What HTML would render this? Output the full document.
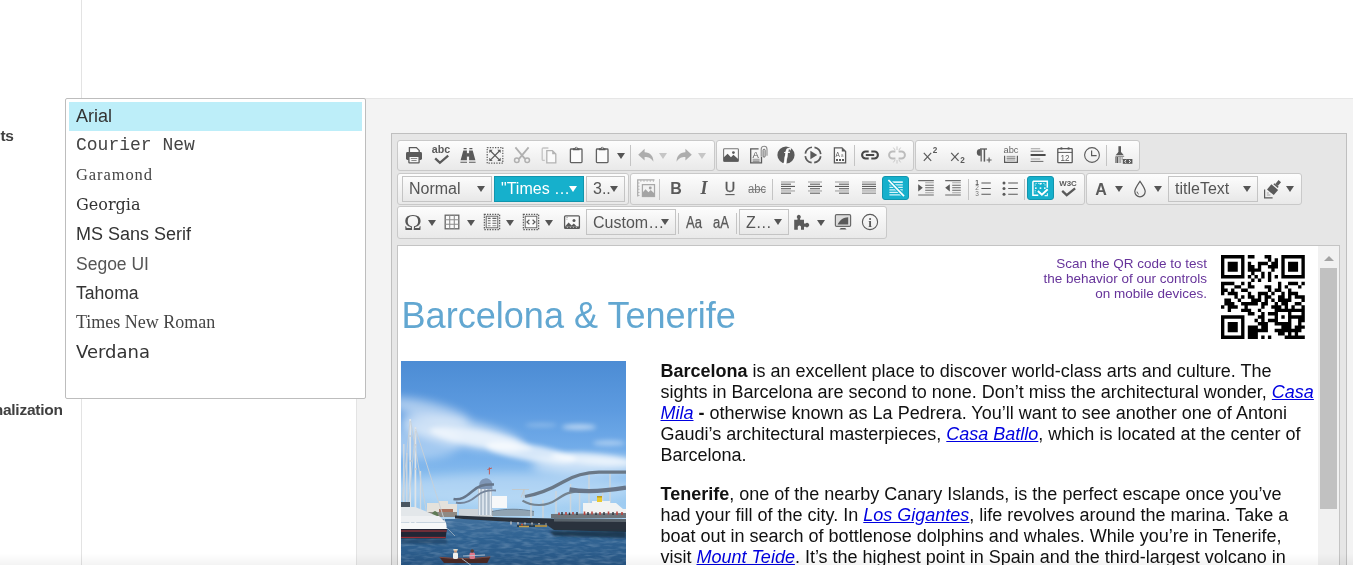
<!DOCTYPE html>
<html><head><meta charset="utf-8"><title>RadEditor</title>
<style>
html,body{margin:0;padding:0}
body{will-change:transform;width:1353px;height:565px;overflow:hidden;position:relative;background:#fff;font-family:"Liberation Sans",sans-serif;color:#333}
.abs{position:absolute}
.vline{left:81px;top:0;width:1px;height:565px;background:#e3e3e3}
.panel{left:356px;top:98px;width:997px;height:467px;background:#f3f3f3;border-left:1px solid #e3e3e3;border-top:1px solid #e6e6e6;box-sizing:border-box}
.editor{left:391px;top:133px;width:956px;height:440px;background:#e6e6e6;border:1px solid #bfbfbf;box-sizing:border-box}
.tb{position:absolute;box-sizing:border-box;border:1px solid #c9c9c9;border-radius:3px;background:linear-gradient(#fdfdfd,#e9e9e9)}
.dd{position:absolute;box-sizing:border-box;border:1px solid #c4c4c4;background:linear-gradient(#fcfcfc,#e8e8e8);font-size:16px;line-height:24px;color:#555;white-space:nowrap;overflow:hidden;padding-left:6px}
.dd.r3{padding-top:1px}
.dd.act{background:#16b0cc;border-color:#1295ad;color:#fff}
.arr{position:absolute;width:0;height:0;border-left:4.3px solid transparent;border-right:4.3px solid transparent;border-top:6.2px solid #555}
.arr.dis{border-top-color:#c6c6c6}
.arr.w{border-top-color:#fff}
.sep{position:absolute;width:1px;height:21px;background:#c4c4c4}
.actbtn{position:absolute;box-sizing:border-box;width:27px;height:24px;border-radius:3px;background:#16b0cc;border:1px solid #1295ad}
.ic{position:absolute;width:20px;height:20px;overflow:visible}
.content{left:397px;top:245px;width:943px;height:330px;background:#fff;border:1px solid #c4c4c4;box-sizing:border-box;overflow:hidden}
.popup{left:65px;top:98px;width:301px;height:301px;background:#fff;border:1px solid #bdbdbd;border-radius:2px;box-sizing:border-box}
.popup .it{position:absolute;left:10px;font-size:18px;line-height:20px;color:#333;white-space:nowrap}
.lbl{font-weight:bold;font-size:15.5px;line-height:20px;letter-spacing:-.25px;color:#404040;white-space:nowrap}
.bodytxt{font-size:18px;line-height:21px;color:#111;white-space:nowrap}
.bodytxt a{color:#0000e0;font-style:italic;text-decoration:underline}
.qrtxt{font-size:13.5px;line-height:14.9px;color:#66339a;text-align:right;white-space:nowrap}
</style></head><body>

<div class="abs vline"></div>
<div class="abs panel"></div>
<div class="abs lbl" style="right:1339.3px;top:125.5px">ts</div>
<div class="abs lbl" style="right:1290.3px;top:400px">nalization</div>
<div class="abs editor"></div>
<div class="tb" style="left:397px;top:140px;width:318px;height:31px"></div>
<div class="tb" style="left:716px;top:140px;width:198px;height:31px"></div>
<div class="tb" style="left:915px;top:140px;width:225px;height:31px"></div>
<svg class="ic" style="left:404.2px;top:145px" viewBox="0 0 20 20"><path d="M5.4 7.6V2.6h7l2.800 2.800v2.200" fill="#fafafa" stroke="#5a5a5a" stroke-width="1.300"/>
<path d="M2 8.400q0-1.400 1.400-1.400h13.200q1.400 0 1.400 1.400v5.200q0 1.400-1.400 1.400H3.400q-1.400 0-1.400-1.400z" fill="#5a5a5a"/>
<rect x="4.900" y="11.300" width="10.200" height="6.500" rx="0.600" fill="#f4f4f4" stroke="#5a5a5a" stroke-width="1.300"/>
<path d="M6.800 13.500h6.400M7.400 15.500h5.200" stroke="#8a8a8a" stroke-width="1"/></svg>
<svg class="ic" style="left:431.4px;top:145px" viewBox="0 0 20 20"><text x="10" y="8.400" text-anchor="middle" font-size="10" font-weight="bold" font-family="Liberation Sans, sans-serif" fill="#5a5a5a" textLength="18.400" lengthAdjust="spacingAndGlyphs">abc</text>
<path d="M4.200 13.300l4.700 4.500 8.300-7.200" fill="none" stroke="#5a5a5a" stroke-width="2.300"/></svg>
<svg class="ic" style="left:458.3px;top:145px" viewBox="0 0 20 20"><path d="M2.6 15.3L5.3 5.6h3.6v9.7zM17.4 15.3L14.7 5.6h-3.6v9.7z" fill="#5a5a5a"/>
<rect x="8.5" y="8.2" width="3" height="3.4" fill="#5a5a5a"/>
<path d="M5.6 3.6h3M11.4 3.6h3" stroke="#5a5a5a" stroke-width="1.1"/>
<path d="M2.4 17.3h6.6M11 17.3h6.6" stroke="#5a5a5a" stroke-width="1.1"/></svg>
<svg class="ic" style="left:484.8px;top:145px" viewBox="0 0 20 20"><rect x="2.2" y="2.6" width="15.6" height="15.6" fill="none" stroke="#5a5a5a" stroke-width="1.2" stroke-dasharray="1.3 1.3"/>
<path d="M5.6 6l8.8 8.8M14.4 6l-8.8 8.8" stroke="#5a5a5a" stroke-width="1.2"/>
<path d="M4.3 4.7h3.4l-3.4 3.4zM15.7 4.7h-3.4l3.4 3.4zM4.3 16.1h3.4l-3.4-3.4zM15.7 16.1h-3.4l3.4-3.4z" fill="#5a5a5a"/></svg>
<svg class="ic" style="left:512.2px;top:145px" viewBox="0 0 20 20"><path d="M3.400 2.400L13 13.800M16.600 2.400L7 13.800" stroke="#b0b0b0" stroke-width="1.800" fill="none"/>
<circle cx="4.800" cy="15.300" r="2.300" fill="none" stroke="#b0b0b0" stroke-width="1.500"/><circle cx="15.200" cy="15.300" r="2.300" fill="none" stroke="#b0b0b0" stroke-width="1.500"/></svg>
<svg class="ic" style="left:539.3px;top:145px" viewBox="0 0 20 20"><path d="M9.4 3H4.2q-1 0-1 1v10.4q0 1 1 1h1.6" fill="none" stroke="#c4c4c4" stroke-width="1.3"/>
<path d="M7.8 5.6h5.6l3.4 3.4v8.8h-9z" fill="#fafafa" stroke="#b3b3b3" stroke-width="1.3"/><path d="M13.2 5.6l3.6 3.6h-3.6z" fill="#b3b3b3"/></svg>
<svg class="ic" style="left:566.4px;top:145px" viewBox="0 0 20 20"><rect x="4.400" y="4" width="11.600" height="13.600" rx="0.800" fill="#fbfbfb" stroke="#606060" stroke-width="1.300"/>
<path d="M6.900 5.300V3.200h1.800a1.500 1.500 0 0 1 3 0h1.800v2.100z" fill="#5a5a5a"/><circle cx="10.200" cy="3" r="0.650" fill="#f4f4f4"/></svg>
<svg class="ic" style="left:592.2px;top:145px" viewBox="0 0 20 20"><rect x="4.400" y="4" width="11.600" height="13.600" rx="0.800" fill="#fbfbfb" stroke="#606060" stroke-width="1.300"/>
<path d="M6.900 5.300V3.200h1.800a1.500 1.500 0 0 1 3 0h1.800v2.100z" fill="#5a5a5a"/><circle cx="10.200" cy="3" r="0.650" fill="#f4f4f4"/></svg>
<div class="arr " style="left:616.7px;top:153px"></div>
<div class="sep" style="left:629.5px;top:145px"></div>
<svg class="ic" style="left:635.5px;top:145px" viewBox="0 0 20 20"><path d="M8.600 3.800L2.200 9.800l6.400 5.800v-3.500c4.200 0 6.600 1.200 8.800 4.600 0-5.600-3.200-9.200-8.800-9.400z" fill="#adadad"/></svg>
<div class="arr dis" style="left:659.4px;top:153px"></div>
<svg class="ic" style="left:674.4px;top:145px" viewBox="0 0 20 20"><path d="M11.400 3.800L17.800 9.800l-6.400 5.800v-3.500c-4.200 0-6.600 1.200-8.800 4.600 0-5.600 3.200-9.200 8.800-9.400z" fill="#adadad"/></svg>
<div class="arr dis" style="left:698.4px;top:153px"></div>
<svg class="ic" style="left:721px;top:145px" viewBox="0 0 20 20"><rect x="2.6" y="3.8" width="14.8" height="12.6" rx="0.8" fill="#fbfbfb" stroke="#777" stroke-width="1.1"/>
<path d="M2.600 16.400v-3.800l4-3.800 3.400 3.400 2.400-2.400 5 4.400v2.200z" fill="#5a5a5a"/><circle cx="12.400" cy="7.600" r="1.400" fill="#5a5a5a"/></svg>
<svg class="ic" style="left:748.7px;top:145px" viewBox="0 0 20 20"><path d="M9.600 3.800H1.700v14h10.800v-6" fill="none" stroke="#5a5a5a" stroke-width="1.300"/>
<text x="6.600" y="12.600" text-anchor="middle" font-size="9.500" font-family="Liberation Sans, sans-serif" fill="#5a5a5a">A</text>
<path d="M3.600 14.300h7" stroke="#9a9a9a" stroke-width="1"/><path d="M3.600 16.100h7" stroke="#5a5a5a" stroke-width="1"/>
<path d="M12.200 11.600V4.200a2.900 2.900 0 0 1 5.800 0v6.600" fill="none" stroke="#8a8a8a" stroke-width="1.100"/><path d="M14.100 5.200v6a1 1 0 0 0 2 0V5.200a1 1 0 0 0-2 0z" fill="none" stroke="#5a5a5a" stroke-width="0.900"/></svg>
<svg class="ic" style="left:775.6px;top:145px" viewBox="0 0 20 20"><circle cx="10" cy="10" r="8.600" fill="#5a5a5a"/>
<text x="10.600" y="15" text-anchor="middle" font-size="17" font-style="italic" font-weight="bold" font-family="Liberation Serif, serif" fill="#fff" stroke="#fff" stroke-width="0.400">f</text></svg>
<svg class="ic" style="left:802.6px;top:145px" viewBox="0 0 20 20"><circle cx="10" cy="10" r="7.800" fill="none" stroke="#5a5a5a" stroke-width="1.700" stroke-dasharray="9.650 2.600" stroke-dashoffset="-1.300"/>
<path d="M7.400 5.800l6.800 4.200-6.800 4.200z" fill="#5a5a5a"/></svg>
<svg class="ic" style="left:829.5px;top:145px" viewBox="0 0 20 20"><path d="M4.400 2.800h7.600l3.600 3.600v11.400H4.400z" fill="#fbfbfb" stroke="#5a5a5a" stroke-width="1.3"/><path d="M11.800 2.800l3.800 3.800h-3.800z" fill="#5a5a5a"/>
<text x="7.600" y="12" text-anchor="middle" font-size="6.500" font-family="Liberation Sans, sans-serif" fill="#5a5a5a">A</text><text x="12.200" y="12" text-anchor="middle" font-size="5" font-family="Liberation Sans, sans-serif" fill="#8a8a8a">a</text>
<path d="M6 14h2v2H6zM9 14h2v2H9zM12 14h2v2h-2z" fill="#5a5a5a"/></svg>
<div class="sep" style="left:853.5px;top:145px"></div>
<svg class="ic" style="left:859.8px;top:145px" viewBox="0 0 20 20"><path d="M8.700 6.500H5.600a3.500 3.500 0 0 0 0 7h3.100M11.300 6.500h3.100a3.500 3.500 0 0 1 0 7h-3.100" fill="none" stroke="#484848" stroke-width="2.100"/>
<path d="M5.800 10h8.400" stroke="#484848" stroke-width="2"/></svg>
<svg class="ic" style="left:887px;top:145px" viewBox="0 0 20 20"><path d="M8.400 6.500H5.600a3.500 3.500 0 0 0 0 7h2.800M11.600 6.500h2.800a3.500 3.500 0 0 1 0 7h-2.800" fill="none" stroke="#bcbcbc" stroke-width="2"/>
<path d="M10 1.400v3.600M10 15v3.600M6.400 2.600l1.800 2.600M13.600 2.600l-1.800 2.600M6.400 17.400l1.800-2.600M13.600 17.400l-1.800-2.600" stroke="#c8c8c8" stroke-width="1"/></svg>
<svg class="ic" style="left:920px;top:145px" viewBox="0 0 20 20"><path d="M3.800 7.900l7.400 8M11.200 7.900l-7.400 8" stroke="#5a5a5a" stroke-width="1.200"/>
<text x="15" y="8.400" text-anchor="middle" font-size="8.200" font-weight="bold" font-family="Liberation Sans, sans-serif" fill="#5a5a5a">2</text></svg>
<svg class="ic" style="left:947.5px;top:145px" viewBox="0 0 20 20"><path d="M3.200 7.900l7.400 8M10.600 7.900l-7.400 8" stroke="#5a5a5a" stroke-width="1.200"/>
<text x="14.500" y="18.100" text-anchor="middle" font-size="8.200" font-weight="bold" font-family="Liberation Sans, sans-serif" fill="#5a5a5a">2</text></svg>
<svg class="ic" style="left:974.3px;top:145px" viewBox="0 0 20 20"><path d="M7.400 4H6.200a3.400 3.400 0 0 0 0 6.800h1.200z" fill="#5a5a5a"/><path d="M6 4h7" stroke="#5a5a5a" stroke-width="1.300"/>
<path d="M7.200 4v12.600" stroke="#777" stroke-width="1.500"/><path d="M10.400 4v12.600" stroke="#5a5a5a" stroke-width="1.500"/>
<path d="M12.600 15h5M15.100 12.500v5" stroke="#5a5a5a" stroke-width="1.100"/></svg>
<svg class="ic" style="left:1001.2px;top:145px" viewBox="0 0 20 20"><text x="10" y="8.400" text-anchor="middle" font-size="8.800" font-family="Liberation Sans, sans-serif" fill="#666" textLength="15" lengthAdjust="spacingAndGlyphs">abc</text>
<path d="M3.600 10.800v6.600h12.800v-6.600" fill="none" stroke="#5a5a5a" stroke-width="1.200"/>
<path d="M5.600 11.400h8.800M5.600 15h8.800" stroke="#9a9a9a" stroke-width="1"/><path d="M5.600 13.200h8.800" stroke="#6a6a6a" stroke-width="1"/></svg>
<svg class="ic" style="left:1028.4px;top:145px" viewBox="0 0 20 20"><path d="M2.800 3.800h9.400M2.800 14h9.400" stroke="#a0a0a0" stroke-width="1.100"/>
<path d="M2.600 6.200h12.800M2.600 16.400h12.800" stroke="#6a6a6a" stroke-width="1"/><path d="M2.600 10h15" stroke="#4a4a4a" stroke-width="2"/></svg>
<svg class="ic" style="left:1055.4px;top:145px" viewBox="0 0 20 20"><rect x="2.800" y="3.600" width="14.400" height="14" rx="0.600" fill="#fbfbfb" stroke="#5a5a5a" stroke-width="1.300"/><path d="M2.800 7.400h14.400" stroke="#5a5a5a" stroke-width="1"/>
<circle cx="6.400" cy="3.400" r="1.200" fill="#5a5a5a"/><circle cx="13.600" cy="3.400" r="1.200" fill="#5a5a5a"/>
<text x="10" y="15.800" text-anchor="middle" font-size="8.600" font-family="Liberation Sans, sans-serif" fill="#5a5a5a" textLength="9" lengthAdjust="spacingAndGlyphs">12</text></svg>
<svg class="ic" style="left:1082.4px;top:145px" viewBox="0 0 20 20"><circle cx="10" cy="10" r="7.400" fill="none" stroke="#5a5a5a" stroke-width="1.100"/><path d="M9.600 5.400v5.200h5" fill="none" stroke="#5a5a5a" stroke-width="1.200"/></svg>
<div class="sep" style="left:1106.4px;top:145px"></div>
<svg class="ic" style="left:1112.4px;top:145px" viewBox="0 0 20 20"><rect x="6.400" y="1.200" width="2.600" height="6.600" fill="#5a5a5a"/><path d="M3.600 10.200L6.400 7h2.600l2.800 3.200z" fill="#5a5a5a"/>
<path d="M3.400 11.400h8.800" stroke="#8a8a8a" stroke-width="1"/>
<path d="M4 12v6M5.600 12v6" stroke="#5a5a5a" stroke-width="1.200"/><path d="M7.200 12v6M8.700 12v6M10.200 12v3" stroke="#9a9a9a" stroke-width="1"/>
<rect x="10.800" y="14" width="9.600" height="4.800" fill="#5a5a5a"/><path d="M14.200 15l-1.600 1.400 1.600 1.400M17 15l1.600 1.400-1.600 1.400" fill="none" stroke="#fff" stroke-width="1"/></svg>
<div class="tb" style="left:397px;top:173px;width:232px;height:32px"></div>
<div class="tb" style="left:630px;top:173px;width:455px;height:32px"></div>
<div class="tb" style="left:1086px;top:173px;width:216px;height:32px"></div>
<div class="dd " style="left:402px;top:176px;width:90px;height:26px">Normal</div>
<div class="arr " style="left:476.7px;top:186px"></div>
<div class="dd act" style="left:494px;top:176px;width:90px;height:26px">&quot;Times …</div>
<div class="arr w" style="left:568.7px;top:186px"></div>
<div class="dd " style="left:586px;top:176px;width:39px;height:26px">3..</div>
<div class="arr " style="left:609.7px;top:186px"></div>
<svg class="ic" style="left:636px;top:178px" viewBox="0 0 20 20"><g transform="translate(10 10) scale(1.12) translate(-10 -10)"><path d="M2.600 17.600V2.800h15" fill="none" stroke="#aaa" stroke-width="1.100"/>
<path d="M5.400 2.800v1.600M8.200 2.800v1.600M11 2.800v1.600M13.800 2.800v1.600M16.600 2.800v1.600M2.600 5.600h1.600M2.600 8.400h1.600M2.600 11.200h1.600M2.600 14h1.600M2.600 16.800h1.600" stroke="#b5b5b5" stroke-width="0.900"/>
<rect x="6.800" y="7" width="10.800" height="10.600" fill="#f2f2f2" stroke="#a8a8a8" stroke-width="1.100"/>
<path d="M6.800 17.600v-3.400l2.800-3 2.600 2.600 2-2 3.400 3.200v2.600z" fill="#a4a4a4"/><circle cx="13.800" cy="10" r="1.300" fill="#a4a4a4"/></g></svg>
<div class="sep" style="left:659.2px;top:179px"></div>
<svg class="ic" style="left:666.3px;top:178px" viewBox="0 0 20 20"><text x="10" y="15.600" text-anchor="middle" font-size="16" font-weight="bold" font-family="Liberation Sans, sans-serif" fill="#5a5a5a">B</text></svg>
<svg class="ic" style="left:693.5px;top:178px" viewBox="0 0 20 20"><text x="10" y="15.600" text-anchor="middle" font-size="18" font-weight="bold" font-style="italic" font-family="Liberation Serif, serif" fill="#5a5a5a">I</text></svg>
<svg class="ic" style="left:720.3px;top:178px" viewBox="0 0 20 20"><text x="10" y="14" text-anchor="middle" font-size="14.500" font-family="Liberation Sans, sans-serif" fill="#5a5a5a" stroke="#5a5a5a" stroke-width="0.300">U</text><path d="M5.400 16.600h9.200" stroke="#5a5a5a" stroke-width="1.100"/></svg>
<svg class="ic" style="left:747.2px;top:178px" viewBox="0 0 20 20"><text x="10" y="15" text-anchor="middle" font-size="12.500" font-family="Liberation Sans, sans-serif" fill="#777" textLength="18" lengthAdjust="spacingAndGlyphs">abc</text><path d="M1.400 11.600h17.200" stroke="#777" stroke-width="0.900"/></svg>
<div class="sep" style="left:771.5px;top:179px"></div>
<svg class="ic" style="left:777.9px;top:178px" viewBox="0 0 20 20"><path d="M3 4.0h14" stroke="#a6a6a6" stroke-width="1.150"/><path d="M3 6.2h10" stroke="#666" stroke-width="1.150"/><path d="M3 8.45h14" stroke="#5a5a5a" stroke-width="1.150"/><path d="M3 10.7h10" stroke="#666" stroke-width="1.150"/><path d="M3 12.95h14" stroke="#a6a6a6" stroke-width="1.150"/><path d="M3 15.2h10" stroke="#666" stroke-width="1.150"/></svg>
<svg class="ic" style="left:804.8px;top:178px" viewBox="0 0 20 20"><path d="M3 4.0h14" stroke="#a6a6a6" stroke-width="1.150"/><path d="M5 6.2h10" stroke="#666" stroke-width="1.150"/><path d="M3 8.45h14" stroke="#5a5a5a" stroke-width="1.150"/><path d="M5 10.7h10" stroke="#666" stroke-width="1.150"/><path d="M3 12.95h14" stroke="#a6a6a6" stroke-width="1.150"/><path d="M5 15.2h10" stroke="#666" stroke-width="1.150"/></svg>
<svg class="ic" style="left:831.7px;top:178px" viewBox="0 0 20 20"><path d="M3 4.0h14" stroke="#a6a6a6" stroke-width="1.150"/><path d="M7 6.2h10" stroke="#666" stroke-width="1.150"/><path d="M3 8.45h14" stroke="#5a5a5a" stroke-width="1.150"/><path d="M7 10.7h10" stroke="#666" stroke-width="1.150"/><path d="M3 12.95h14" stroke="#a6a6a6" stroke-width="1.150"/><path d="M7 15.2h10" stroke="#666" stroke-width="1.150"/></svg>
<svg class="ic" style="left:858.8px;top:178px" viewBox="0 0 20 20"><path d="M3 4.0h14" stroke="#a6a6a6" stroke-width="1.150"/><path d="M3 6.2h14" stroke="#666" stroke-width="1.150"/><path d="M3 8.45h14" stroke="#5a5a5a" stroke-width="1.150"/><path d="M3 10.7h14" stroke="#666" stroke-width="1.150"/><path d="M3 12.95h14" stroke="#a6a6a6" stroke-width="1.150"/><path d="M3 15.2h14" stroke="#8a8a8a" stroke-width="1.150"/></svg>
<div class="actbtn" style="left:882px;top:176px"></div>
<svg class="ic" style="left:885.6px;top:178px" viewBox="0 0 20 20"><path d="M3.400 3.200h13.400v1.800H3.400zM3.400 6.200h13.400v1.300H3.400zM3.400 8.700h13.400v1.300H3.400zM3.400 11.200h13.400v1.300H3.400zM3.400 13.700h13.400v1.300H3.400zM3.400 16.200h13.400v1.300H3.400z" fill="#d8f4fa"/>
<path d="M2 1.600l16.400 17" stroke="#16b0cc" stroke-width="3.600"/><path d="M2.400 2l15.600 16.200" stroke="#fff" stroke-width="1.700"/></svg>
<svg class="ic" style="left:916px;top:178px" viewBox="0 0 20 20"><path d="M2.200 2.600h15.600M2.200 17h15.600" stroke="#6a6a6a" stroke-width="1.100"/>
<path d="M9.200 4.800h8.600M9.200 14.800h8.600" stroke="#a6a6a6" stroke-width="1.100"/><path d="M9.200 7.300h8.600M9.200 9.800h8.600M9.200 12.300h8.600" stroke="#666" stroke-width="1.100"/>
<path d="M2.200 6.200l4.600 3.600-4.600 3.600z" fill="#5a5a5a"/></svg>
<svg class="ic" style="left:943px;top:178px" viewBox="0 0 20 20"><path d="M2.200 2.600h15.600M2.200 17h15.600" stroke="#6a6a6a" stroke-width="1.100"/>
<path d="M9.200 4.800h8.600M9.200 14.800h8.600" stroke="#a6a6a6" stroke-width="1.100"/><path d="M9.200 7.300h8.600M9.200 9.800h8.600M9.200 12.300h8.600" stroke="#666" stroke-width="1.100"/>
<path d="M6.800 6.200l-4.600 3.600 4.600 3.600z" fill="#5a5a5a"/></svg>
<div class="sep" style="left:967.5px;top:179px"></div>
<svg class="ic" style="left:973.2px;top:178px" viewBox="0 0 20 20"><path d="M8.400 5h9.400" stroke="#7a7a7a" stroke-width="1.300"/><path d="M8.400 10.500h9.400M8.400 16.200h9.400" stroke="#5a5a5a" stroke-width="1.100"/>
<text x="4" y="7" text-anchor="middle" font-size="6.500" font-weight="bold" font-family="Liberation Sans, sans-serif" fill="#5a5a5a">1</text>
<text x="4" y="12.300" text-anchor="middle" font-size="6.500" font-family="Liberation Sans, sans-serif" fill="#777">2</text>
<text x="4" y="17.800" text-anchor="middle" font-size="6.500" font-family="Liberation Sans, sans-serif" fill="#777">3</text></svg>
<svg class="ic" style="left:1000.4px;top:178px" viewBox="0 0 20 20"><path d="M8.200 5h9.600" stroke="#7a7a7a" stroke-width="1.300"/><path d="M8.200 10.500h9.600M8.200 16.200h9.600" stroke="#5a5a5a" stroke-width="1.100"/>
<circle cx="4" cy="5" r="1.500" fill="#5a5a5a"/><circle cx="4" cy="10.500" r="1.500" fill="#5a5a5a"/><circle cx="4" cy="16.200" r="1.500" fill="#5a5a5a"/></svg>
<div class="sep" style="left:1024.3px;top:179px"></div>
<div class="actbtn" style="left:1027px;top:176px"></div>
<svg class="ic" style="left:1030.4px;top:178px" viewBox="0 0 20 20"><path d="M2.900 3.200h14.400v6.600M2.900 3.200v14h5.400" fill="none" stroke="#fff" stroke-width="1.500"/>
<path d="M5.200 7.800V5.400h9.800v2.400M5.200 12v3" fill="none" stroke="#c8eef6" stroke-width="0.900" stroke-dasharray="1.400 1.200"/>
<rect x="9.600" y="5" width="1.800" height="1.600" fill="#fff"/><rect x="5" y="9.400" width="1.600" height="1.500" fill="#fff"/><rect x="9.700" y="9.400" width="1.600" height="1.500" fill="#fff"/><rect x="14" y="9.400" width="1.600" height="1.500" fill="#fff"/>
<path d="M7.900 13.100l4 3.600 5.800-5.500" fill="none" stroke="#fff" stroke-width="2"/>
<path d="M14.600 17.600h2.800v-2.400" fill="none" stroke="#e4f7fb" stroke-width="1.100"/></svg>
<svg class="ic" style="left:1058px;top:178px" viewBox="0 0 20 20"><text x="10" y="8.400" text-anchor="middle" font-size="7.400" font-weight="bold" font-family="Liberation Sans, sans-serif" fill="#5a5a5a" textLength="17.600" lengthAdjust="spacingAndGlyphs">W3C</text>
<path d="M4.200 12.800l4.500 4.300 8.400-6.800" fill="none" stroke="#5a5a5a" stroke-width="2.300"/></svg>
<svg class="ic" style="left:1090.7px;top:178px" viewBox="0 0 20 20"><text x="10" y="16.900" text-anchor="middle" font-size="16" font-weight="bold" font-family="Liberation Sans, sans-serif" fill="#5a5a5a">A</text></svg>
<div class="arr " style="left:1114.6px;top:186px"></div>
<svg class="ic" style="left:1130.2px;top:179px" viewBox="0 0 20 20"><path d="M10 2.400C8 5.400 4.800 9.600 4.800 12.600a5.200 5.200 0 0 0 10.400 0C15.200 9.600 12 5.400 10 2.400z" fill="none" stroke="#5a5a5a" stroke-width="1.200"/>
<path d="M7 12.600a3 3 0 0 0 1.800 2.600" fill="none" stroke="#5a5a5a" stroke-width="1"/></svg>
<div class="arr " style="left:1154.1px;top:186px"></div>
<div class="dd " style="left:1168px;top:176px;width:90px;height:26px">titleText</div>
<div class="arr " style="left:1242.7px;top:186px"></div>
<svg class="ic" style="left:1261.9px;top:179.5px" viewBox="0 0 20 20"><g transform="rotate(40 12 8)"><rect x="10.400" y="-1" width="3.200" height="5" fill="#5a5a5a"/><rect x="9.200" y="4" width="5.600" height="1.600" fill="#5a5a5a"/>
<path d="M7.600 6.800h8.800v6.800H7.600z" fill="#5a5a5a"/></g>
<path d="M2.600 9.600v8.200h8" fill="none" stroke="#5a5a5a" stroke-width="1.200"/><path d="M4.800 13h2M4.800 15h3.600" stroke="#9a9a9a" stroke-width="0.900"/></svg>
<div class="arr " style="left:1285.5px;top:186px"></div>
<div class="tb" style="left:397px;top:206px;width:490px;height:33px"></div>
<svg class="ic" style="left:403.3px;top:212px" viewBox="0 0 20 20"><text x="10" y="18" text-anchor="middle" font-size="24" font-family="Liberation Serif, serif" fill="#555">Ω</text></svg>
<div class="arr " style="left:427.6px;top:220px"></div>
<svg class="ic" style="left:442.1px;top:212px" viewBox="0 0 20 20"><rect x="3.200" y="3.200" width="13.600" height="13.600" fill="#fafafa" stroke="#666" stroke-width="1.300"/>
<path d="M7.700 3.200v13.600M12.300 3.200v13.600M3.200 7.700h13.600M3.200 12.300h13.600" stroke="#8c8c8c" stroke-width="1.100"/></svg>
<div class="arr " style="left:466.6px;top:220px"></div>
<svg class="ic" style="left:481.5px;top:212px" viewBox="0 0 20 20"><rect x="2.400" y="2.400" width="15.200" height="15.200" fill="none" stroke="#5a5a5a" stroke-width="1.300" stroke-dasharray="1.400 1.200"/>
<rect x="4.200" y="4.200" width="11.600" height="11.600" fill="#fafafa" stroke="#5a5a5a" stroke-width="0.900"/>
<path d="M5.800 6.400h2.800M5.800 8.800h2.800M5.800 11.200h2.800M10.400 6.400h4M10.400 8.800h4M10.400 11.200h4" stroke="#666" stroke-width="1.100"/><path d="M5.800 13.600h2.800M10.400 13.600h4" stroke="#a6a6a6" stroke-width="1.100"/></svg>
<div class="arr " style="left:506.2px;top:220px"></div>
<svg class="ic" style="left:520.7px;top:212px" viewBox="0 0 20 20"><rect x="2.400" y="2.400" width="15.200" height="15.200" fill="none" stroke="#5a5a5a" stroke-width="1.300" stroke-dasharray="1.400 1.200"/>
<rect x="4.200" y="4.200" width="11.600" height="11.600" fill="#fafafa" stroke="#5a5a5a" stroke-width="0.900"/>
<path d="M8.400 7.800L6 10l2.400 2.200M11.600 7.800L14 10l-2.400 2.200" fill="none" stroke="#5a5a5a" stroke-width="1.200"/></svg>
<div class="arr " style="left:545.4px;top:220px"></div>
<svg class="ic" style="left:561.9px;top:212px" viewBox="0 0 20 20"><rect x="2.600" y="3.800" width="14.800" height="12.600" rx="1" fill="#fafafa" stroke="#5a5a5a" stroke-width="1.300"/>
<path d="M3 14.400l3.600-3.800 3 3 2.200-2 3 2.800z" fill="#5a5a5a"/><circle cx="12" cy="8.400" r="1.500" fill="#5a5a5a"/>
<path d="M2.600 14.400h14.800v2H2.600z" fill="#5a5a5a"/><path d="M5.400 14.800v1.200M8.400 14.800v1.200M11.400 14.800v1.200M14.400 14.800v1.200" stroke="#bbb" stroke-width="1"/>
<path d="M4.400 5.400h1.400M4.400 7.200h1" stroke="#8a8a8a" stroke-width="0.800"/></svg>
<div class="dd r3" style="left:586px;top:209px;width:90px;height:26px">Custom…</div>
<div class="arr " style="left:660.7px;top:219px"></div>
<div class="sep" style="left:678.2px;top:213px"></div>
<svg class="ic" style="left:684.4px;top:212px" viewBox="0 0 20 20"><text x="10" y="15.800" text-anchor="middle" font-size="15.600" font-family="Liberation Sans, sans-serif" fill="#5a5a5a" stroke="#5a5a5a" stroke-width="0.250" textLength="16" lengthAdjust="spacingAndGlyphs">Aa</text></svg>
<svg class="ic" style="left:711px;top:212px" viewBox="0 0 20 20"><text x="10" y="15.800" text-anchor="middle" font-size="15.600" font-family="Liberation Sans, sans-serif" fill="#5a5a5a" stroke="#5a5a5a" stroke-width="0.250" textLength="16" lengthAdjust="spacingAndGlyphs">aA</text></svg>
<div class="sep" style="left:735.6px;top:213px"></div>
<div class="dd r3" style="left:739px;top:209px;width:50px;height:26px">Z…</div>
<div class="arr " style="left:773.7px;top:219px"></div>
<svg class="ic" style="left:792.4px;top:212px" viewBox="0 0 20 20"><path d="M2.200 7.800h3.300V6.400a2 2 0 1 1 2.600 0v1.400h3.900v3.600h1.600a2.200 2.200 0 1 1 0 3.400h-1.600v3H9v-2a1.700 1.700 0 1 0-3.200 0v2H2.200z" fill="#5a5a5a"/></svg>
<div class="arr " style="left:816.7px;top:220px"></div>
<svg class="ic" style="left:832.9px;top:212px" viewBox="0 0 20 20"><rect x="2.400" y="2.600" width="15.200" height="11.800" rx="1.200" fill="#dcdcdc" stroke="#6a6a6a" stroke-width="1.200"/>
<path d="M4.600 12.400c2.600-5 6-7 10.600-7.200v7.200z" fill="#5a5a5a"/><path d="M6.400 17.400l1.400-1.400h4.400l1.400 1.400z" fill="#5a5a5a"/></svg>
<svg class="ic" style="left:859.8px;top:212px" viewBox="0 0 20 20"><circle cx="10" cy="10" r="7.600" fill="none" stroke="#5a5a5a" stroke-width="1.100"/>
<text x="10" y="14.600" text-anchor="middle" font-size="13" font-weight="bold" font-family="Liberation Serif, serif" fill="#5a5a5a">i</text></svg>
<div class="abs content">
<div class="abs qrtxt" style="right:132px;top:11px">Scan the QR code to test<br>the behavior of our controls<br>on mobile devices.</div>
<svg class="abs" style="left:822.8px;top:8.900000000000006px" width="83.8" height="83.8" viewBox="0 0 25 25"><path d="M0 0h7v1.03h-7zM8 0h2v1.03h-2zM13 0h2v1.03h-2zM18 0h7v1.03h-7zM0 1h1v1.03h-1zM6 1h1v1.03h-1zM14 1h1v1.03h-1zM16 1h1v1.03h-1zM18 1h1v1.03h-1zM24 1h1v1.03h-1zM0 2h1v1.03h-1zM2 2h3v1.03h-3zM6 2h1v1.03h-1zM8 2h1v1.03h-1zM11 2h3v1.03h-3zM15 2h2v1.03h-2zM18 2h1v1.03h-1zM20 2h3v1.03h-3zM24 2h1v1.03h-1zM0 3h1v1.03h-1zM2 3h3v1.03h-3zM6 3h1v1.03h-1zM8 3h2v1.03h-2zM11 3h1v1.03h-1zM14 3h3v1.03h-3zM18 3h1v1.03h-1zM20 3h3v1.03h-3zM24 3h1v1.03h-1zM0 4h1v1.03h-1zM2 4h3v1.03h-3zM6 4h1v1.03h-1zM8 4h4v1.03h-4zM15 4h1v1.03h-1zM18 4h1v1.03h-1zM20 4h3v1.03h-3zM24 4h1v1.03h-1zM0 5h1v1.03h-1zM6 5h1v1.03h-1zM9 5h1v1.03h-1zM12 5h1v1.03h-1zM14 5h1v1.03h-1zM18 5h1v1.03h-1zM24 5h1v1.03h-1zM0 6h7v1.03h-7zM8 6h1v1.03h-1zM10 6h1v1.03h-1zM12 6h1v1.03h-1zM14 6h1v1.03h-1zM16 6h1v1.03h-1zM18 6h7v1.03h-7zM9 7h1v1.03h-1zM11 7h1v1.03h-1zM14 7h1v1.03h-1zM0 8h4v1.03h-4zM6 8h1v1.03h-1zM8 8h1v1.03h-1zM17 8h1v1.03h-1zM20 8h3v1.03h-3zM24 8h1v1.03h-1zM0 9h1v1.03h-1zM4 9h2v1.03h-2zM8 9h2v1.03h-2zM13 9h2v1.03h-2zM17 9h1v1.03h-1zM19 9h1v1.03h-1zM23 9h1v1.03h-1zM0 10h2v1.03h-2zM3 10h1v1.03h-1zM6 10h2v1.03h-2zM14 10h1v1.03h-1zM16 10h2v1.03h-2zM20 10h1v1.03h-1zM0 11h1v1.03h-1zM2 11h3v1.03h-3zM8 11h1v1.03h-1zM11 11h3v1.03h-3zM15 11h1v1.03h-1zM18 11h1v1.03h-1zM20 11h3v1.03h-3zM4 12h1v1.03h-1zM6 12h1v1.03h-1zM8 12h2v1.03h-2zM11 12h1v1.03h-1zM13 12h2v1.03h-2zM17 12h2v1.03h-2zM20 12h1v1.03h-1zM22 12h3v1.03h-3zM1 13h2v1.03h-2zM5 13h1v1.03h-1zM9 13h3v1.03h-3zM13 13h1v1.03h-1zM15 13h1v1.03h-1zM17 13h4v1.03h-4zM24 13h1v1.03h-1zM1 14h3v1.03h-3zM6 14h5v1.03h-5zM12 14h2v1.03h-2zM16 14h1v1.03h-1zM18 14h2v1.03h-2zM22 14h2v1.03h-2zM0 15h1v1.03h-1zM2 15h3v1.03h-3zM7 15h1v1.03h-1zM12 15h1v1.03h-1zM15 15h3v1.03h-3zM19 15h1v1.03h-1zM21 15h1v1.03h-1zM24 15h1v1.03h-1zM2 16h1v1.03h-1zM6 16h3v1.03h-3zM11 16h1v1.03h-1zM16 16h9v1.03h-9zM8 17h2v1.03h-2zM12 17h1v1.03h-1zM14 17h3v1.03h-3zM20 17h1v1.03h-1zM24 17h1v1.03h-1zM0 18h7v1.03h-7zM11 18h2v1.03h-2zM16 18h1v1.03h-1zM18 18h1v1.03h-1zM20 18h5v1.03h-5zM0 19h1v1.03h-1zM6 19h1v1.03h-1zM10 19h1v1.03h-1zM12 19h1v1.03h-1zM14 19h3v1.03h-3zM20 19h1v1.03h-1zM23 19h2v1.03h-2zM0 20h1v1.03h-1zM2 20h3v1.03h-3zM6 20h1v1.03h-1zM11 20h3v1.03h-3zM16 20h5v1.03h-5zM23 20h1v1.03h-1zM0 21h1v1.03h-1zM2 21h3v1.03h-3zM6 21h1v1.03h-1zM8 21h3v1.03h-3zM12 21h2v1.03h-2zM18 21h3v1.03h-3zM22 21h3v1.03h-3zM0 22h1v1.03h-1zM2 22h3v1.03h-3zM6 22h1v1.03h-1zM8 22h6v1.03h-6zM16 22h8v1.03h-8zM0 23h1v1.03h-1zM6 23h1v1.03h-1zM8 23h3v1.03h-3zM17 23h2v1.03h-2zM20 23h1v1.03h-1zM22 23h1v1.03h-1zM0 24h7v1.03h-7zM8 24h3v1.03h-3zM12 24h1v1.03h-1zM14 24h1v1.03h-1zM19 24h6v1.03h-6z" fill="#000"/></svg>
<div class="abs" style="left:3.5px;top:50px;font-size:36.1px;line-height:40px;color:#62a7d1;white-space:nowrap">Barcelona &amp; Tenerife</div>
<svg class="abs" style="left:3px;top:115px" width="225" height="210" viewBox="0 0 225 210">
<defs>
<linearGradient id="sky" x1="0" y1="0" x2="0" y2="1"><stop offset="0" stop-color="#4c8cd4"/><stop offset="0.3" stop-color="#5d9be0"/><stop offset="0.55" stop-color="#74aeea"/><stop offset="0.8" stop-color="#93c5f0"/><stop offset="1" stop-color="#b4d9f4"/></linearGradient>
<linearGradient id="sea" x1="0" y1="0" x2="0" y2="1"><stop offset="0" stop-color="#41709d"/><stop offset="0.35" stop-color="#2f6292"/><stop offset="1" stop-color="#275583"/></linearGradient>
<filter id="b5" x="-30%" y="-80%" width="160%" height="260%"><feGaussianBlur stdDeviation="5"/></filter>
<filter id="b3" x="-20%" y="-60%" width="140%" height="220%"><feGaussianBlur stdDeviation="2.600"/></filter>
<filter id="b1" x="-20%" y="-50%" width="140%" height="200%"><feGaussianBlur stdDeviation="1.300"/></filter>
<filter id="b0"><feGaussianBlur stdDeviation="0.450"/></filter>
<filter id="nz" x="0" y="0" width="100%" height="100%"><feTurbulence type="fractalNoise" baseFrequency="0.09 0.35" numOctaves="2" seed="7"/><feColorMatrix type="matrix" values="0 0 0 0 0.850  0 0 0 0 0.920  0 0 0 0 1  0.900 0 0 0 -0.380"/></filter>
<filter id="nd" x="0" y="0" width="100%" height="100%"><feTurbulence type="fractalNoise" baseFrequency="0.08 0.300" numOctaves="2" seed="23"/><feColorMatrix type="matrix" values="0 0 0 0 0.050  0 0 0 0 0.150  0 0 0 0 0.300  0.900 0 0 0 -0.400"/></filter>
</defs>
<rect width="225" height="166" fill="url(#sky)"/>
<g filter="url(#b5)" fill="#fff">
<ellipse cx="28" cy="50" rx="42" ry="9" opacity=".5" transform="rotate(14 28 50)"/>
<ellipse cx="60" cy="72" rx="62" ry="13" opacity=".62" transform="rotate(11 60 72)"/>
<ellipse cx="20" cy="82" rx="40" ry="16" opacity=".35"/>
<ellipse cx="190" cy="104" rx="60" ry="9" opacity=".6"/>
<ellipse cx="110" cy="128" rx="130" ry="16" opacity=".3"/>
</g>
<g filter="url(#b3)" fill="#fff">
<ellipse cx="80" cy="78" rx="52" ry="8" opacity=".55" transform="rotate(10 80 78)"/>
<ellipse cx="130" cy="92" rx="46" ry="8" opacity=".7" transform="rotate(9 130 92)"/>
<ellipse cx="190" cy="98" rx="40" ry="5.500" opacity=".65" transform="rotate(5 190 98)"/>
<ellipse cx="178" cy="66" rx="17" ry="2.600" opacity=".6"/>
<ellipse cx="208" cy="82" rx="16" ry="2.600" opacity=".45"/>
<ellipse cx="140" cy="64" rx="16" ry="1.800" opacity=".3"/>
</g>
<rect y="158" width="225" height="52" fill="url(#sea)"/>
<rect y="160" width="225" height="50" filter="url(#nz)" opacity=".55"/>
<rect y="160" width="225" height="50" filter="url(#nd)" opacity=".6"/>
<g filter="url(#b0)">
<!-- far buildings -->
<path d="M26 156v-14h12v-2h9v3h9v13z" fill="#e4e2dc"/><path d="M38 156v-8h14v8z" fill="#a8705c"/><path d="M26 156v-5h30v5z" fill="#8e8a84"/>
<path d="M30 156c2-8 6-8 8 0z" fill="#5f7a55"/>
<rect x="91" y="135" width="15" height="12" fill="#f6f8f9"/>
<path d="M58 148h34v8H58z" fill="#cfd4d8"/>
<!-- left wave structure -->
<path d="M77 154v-28h14v28z" fill="#aebdcc"/>
<path d="M78.500 154v-28M82 154v-30M85.500 154v-30M89.500 154v-30" stroke="#e6edf3" stroke-width="1.500"/>
<path d="M78.200 124.500a6.700 6.700 0 0 1 13.200-2v5.500H78.200z" fill="#7f97b7"/>
<path d="M52.500 138c7 1.500 12-2 18.500-7.500s11-7.500 22-7" fill="none" stroke="#66768a" stroke-width="2.500"/>
<path d="M55 141.500c8 2 14-1 20-6s11-6.500 20-6" fill="none" stroke="#74849a" stroke-width="1.900"/>
<path d="M88.400 106.400v7M86.500 108.500l4.500-1.500" stroke="#c4524c" stroke-width="0.900"/>
<path d="M111 128.500h17M123 128.500v9M123 128.500l-3 8" stroke="#c8c4bb" stroke-width="0.700"/>
<!-- footbridge in the middle -->
<path d="M91 151c14-3 28-3 42 0v4H91z" fill="#8b98a3" opacity=".8"/><path d="M91 150.500c14-3 28-3 42 0" fill="none" stroke="#5f6b77" stroke-width="1" opacity=".8"/>
<!-- right bridge -->
<path d="M130 157v-21M142 157v-18M155 157v-27M169.500 157v-34M178.600 157v-28M188 157v-45M201.700 157v-30M209 157v-46" stroke="#ccd5dc" stroke-width="1.500"/>
<path d="M121.500 139.600c10 6 24 6 34-1s14-7.500 22-8.500" fill="none" stroke="#75838f" stroke-width="2.200"/>
<path d="M124 135.500c14-2.500 26-7.500 38-14.500s22-9.500 36-9.800h27" fill="none" stroke="#6a7887" stroke-width="3.200"/>
<path d="M168.500 128.500c16 3 36 1.500 56.500-1.800" fill="none" stroke="#677588" stroke-width="4.400"/>
<!-- ship + crowd -->
<path d="M182 155v-13h9v-2h18v2h6l7 6h3v7z" fill="#f1f3f3"/><rect x="196" y="135" width="5" height="6" fill="#e9c92f"/><path d="M196 135h5v1.500h-5z" fill="#b89a20"/>
<path d="M150 157h75v-5l-75 1z" fill="#6d747c"/>
<path d="M158 154v-2.500M165 154v-3M172 153.500v-2.500M183.500 154v-3.500M191 153.500v-3M199 154v-3M207.500 153.500v-3M216 154v-3.500M221 154v-3" stroke="#b8433c" stroke-width="1.600"/>
<path d="M161 154v-3M168.500 154v-2.500M176 154v-3M187 154v-3M195 154v-2.500M203 154v-3M212 154v-3" stroke="#2c3138" stroke-width="1.400"/>
<!-- pier -->
<path d="M54 154.500l50 2 49 1 72 0.500v13l-72-2-8-5.500-41-3-50-3z" fill="#2a333d"/>
<path d="M153 157.500l72 .500v3l-72-.500z" fill="#59626b"/>
<path d="M110 160.500v3M117 161v3M124 161.500v3M131 161.500v3.500M138 162v3.500M145 162.500v3.500" stroke="#aeb6bd" stroke-width="1.600"/>
<path d="M116 163.500h30v2.500h-30z" fill="#1f2730" opacity=".7"/>
<path d="M118 165.500h10M134 165h12" stroke="#c7a24a" stroke-width="1.600"/><circle cx="121" cy="163.500" r="1" fill="#d8502f"/>
</g>
<g filter="url(#b1)">
<path d="M148 170h77v7l-72-2z" fill="#1b3148" opacity=".85"/>
<path d="M0 178h46v5H0z" fill="#20405f" opacity=".6"/>
</g>
<g filter="url(#b0)">
<!-- sailboats left -->
<path d="M9.200 58v104M14.400 66v96" stroke="#dfe4e8" stroke-width="1.700"/><path d="M2.800 83v78M5.800 92v66M19.500 110v50" stroke="#d3d9df" stroke-width="1.300"/>
<path d="M8.200 75h2.400M13.400 84h2.400M8 100h2.800M13.200 108h2.800" stroke="#c4ccd4" stroke-width="1.400"/>
<path d="M14.600 68L44 161M9.600 60l16 92M9 60L1 140M14.400 70L7 150" stroke="#c8d0d7" stroke-width="0.900"/>
<path d="M0 146h14l10 4 12 5H0z" fill="#e3e7ea"/><path d="M0 141h9v5H0z" fill="#4a5560"/>
<path d="M0 155h38l7 6.500H0z" fill="#eef0f2"/>
<path d="M0 161.500h45l1 6.500H0z" fill="#f7f8f8"/><path d="M0 168h46l-1.500 9.500H0z" fill="#222834"/><path d="M0 170h45.700" stroke="#b9363c" stroke-width="1.100"/><path d="M0 176.400h44.700" stroke="#a83138" stroke-width="1"/>
<path d="M45 166l9 9" stroke="#9fb0bf" stroke-width="0.800"/>
<!-- rowboat -->
<path d="M38.700 196.500c16 1.500 34 1.500 50.600-.500l-3 6H43z" fill="#4b2a28"/><path d="M38.700 196.300c16 1.600 34 1.600 50.600-.500" stroke="#7e4a40" stroke-width="1" fill="none"/>
<rect x="52" y="191.500" width="5" height="6.500" rx="1.500" fill="#f1f2f0"/><circle cx="54.500" cy="190" r="1.700" fill="#c99b7b"/><path d="M52.300 188.800h4.500" stroke="#efe9d6" stroke-width="1.300"/>
<rect x="68.500" y="191.500" width="5.500" height="6.500" rx="1.500" fill="#e0798a"/><circle cx="71.200" cy="190" r="1.800" fill="#5a3a30"/>
<path d="M60.800 197.600l11 8M62 195l22-1" stroke="#b9c6d2" stroke-width="0.900"/>
</g>
</svg>
<div class="abs bodytxt" style="left:262.5px;top:115px"><b>Barcelona</b> is an excellent place to discover world-class arts and culture. The</div>
<div class="abs bodytxt" style="left:262.5px;top:136px">sights in Barcelona are second to none. Don’t miss the architectural wonder, <a>Casa</a></div>
<div class="abs bodytxt" style="left:262.5px;top:157px"><a>Mila</a> <b>-</b> otherwise known as La Pedrera. You’ll want to see another one of Antoni</div>
<div class="abs bodytxt" style="left:262.5px;top:178px">Gaudi’s architectural masterpieces, <a>Casa Batllo</a>, which is located at the center of</div>
<div class="abs bodytxt" style="left:262.5px;top:199px">Barcelona.</div>
<div class="abs bodytxt" style="left:262.5px;top:238px"><b>Tenerife</b>, one of the nearby Canary Islands, is the perfect escape once you’ve</div>
<div class="abs bodytxt" style="left:262.5px;top:259px">had your fill of the city. In <a>Los Gigantes</a>, life revolves around the marina. Take a</div>
<div class="abs bodytxt" style="left:262.5px;top:280px">boat out in search of bottlenose dolphins and whales. While you’re in Tenerife,</div>
<div class="abs bodytxt" style="left:262.5px;top:301px">visit <a>Mount Teide</a>. It’s the highest point in Spain and the third-largest volcano in</div>
<div class="abs" style="left:920px;top:0;width:21px;height:330px;background:#f1f1f1"></div>
<div class="abs" style="left:922px;top:22px;width:17px;height:241px;background:#c1c1c1"></div>
<div class="abs" style="left:925.5999999999999px;top:9.699999999999989px;width:0;height:0;border-left:5px solid transparent;border-right:5px solid transparent;border-bottom:5.5px solid #a3a3a3"></div>
</div>
<div class="abs popup">
<div class="abs" style="left:3px;top:3px;width:293px;height:29px;background:#bdeef9"></div>
<div class="it" style='top:7px;font-family:"Liberation Sans",sans-serif;font-size:18px;color:#333'>Arial</div>
<div class="it" style='top:35.5px;font-family:"Liberation Mono",monospace;font-size:18px;color:#444'>Courier New</div>
<div class="it" style='top:66px;font-family:"Liberation Serif",serif;letter-spacing:.9px;font-size:16.5px;color:#444'>Garamond</div>
<div class="it" style='top:95.5px;font-family:"DejaVu Serif","Liberation Serif",serif;font-size:16px;color:#333'>Georgia</div>
<div class="it" style='top:125px;font-family:"Liberation Sans",sans-serif;font-size:18px;color:#333'>MS Sans Serif</div>
<div class="it" style='top:154.5px;font-family:"Liberation Sans",sans-serif;font-size:17.5px;color:#555'>Segoe UI</div>
<div class="it" style='top:184px;font-family:"Liberation Sans",sans-serif;font-size:17.6px;color:#333'>Tahoma</div>
<div class="it" style='top:212.5px;font-family:"Liberation Serif",serif;font-size:18px;color:#444'>Times New Roman</div>
<div class="it" style='top:243px;font-family:"DejaVu Sans",sans-serif;font-size:18px;color:#333'>Verdana</div>
</div>
<div class="abs" style="left:0;top:553px;width:1353px;height:12px;background:linear-gradient(rgba(0,0,0,0),rgba(0,0,0,.045))"></div>
</body></html>
